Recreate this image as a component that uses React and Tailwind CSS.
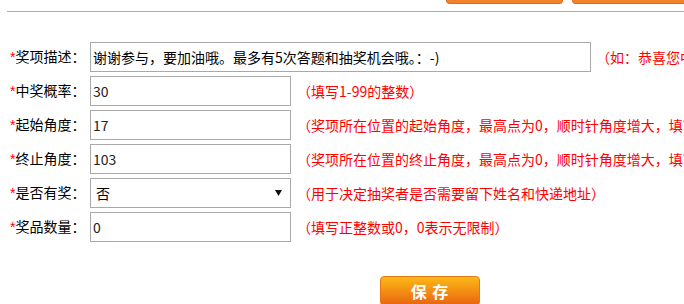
import { useState } from 'react'

const FONT = { fontFamily: '"Noto Sans CJK SC", "Liberation Sans", sans-serif' }

const ROWS = [
  { label: '奖项描述', value: '谢谢参与，要加油哦。最多有5次答题和抽奖机会哦。：-)', wide: true, hint: '（如：恭喜您中奖了）' },
  { label: '中奖概率', value: '30', hint: '（填写1-99的整数）' },
  { label: '起始角度', value: '17', hint: '（奖项所在位置的起始角度，最高点为0，顺时针角度增大，填写）' },
  { label: '终止角度', value: '103', hint: '（奖项所在位置的终止角度，最高点为0，顺时针角度增大，填写）' },
  { label: '是否有奖', value: '否', select: true, hint: '（用于决定抽奖者是否需要留下姓名和快递地址）' },
  { label: '奖品数量', value: '0', hint: '（填写正整数或0，0表示无限制）' },
]

function Field({ row }) {
  const [val, setVal] = useState(row.value)
  if (row.select) {
    return (
      <div className="flex shrink-0 items-center justify-between w-[201px] h-[30px] border border-[#a9a9a9] bg-white pl-[5px] pr-[8px] text-[14px] text-black">
        <span>{val}</span>
        <svg width="7" height="6" viewBox="0 0 7 6"><path d="M0 0h7L3.5 6z" fill="#111" /></svg>
      </div>
    )
  }
  return (
    <input
      value={val}
      onChange={e => setVal(e.target.value)}
      className={`${row.wide ? 'w-[501px]' : 'w-[201px]'} shrink-0 h-[30px] border border-[#a9a9a9] bg-white px-[2px] text-[14px] ${row.wide ? 'text-black' : 'text-[#222]'} outline-none`}
      style={FONT}
    />
  )
}

export default function App() {
  return (
    <div className="w-[684px] h-[304px] overflow-hidden bg-white" style={FONT}>
      {/* tabs scrolled off the top */}
      <div className="flex h-[4px] pl-[446px] gap-[9px]">
        <div className="w-[117px] h-[4px] shrink-0 rounded-b-[4px] border border-t-0 border-[#dd6a1c] bg-[#f4822c]" />
        <div className="w-[117px] h-[4px] shrink-0 rounded-b-[4px] border border-t-0 border-[#dd6a1c] bg-[#f4822c]" />
      </div>
      <div className="mt-[7px] ml-[7px] h-px bg-[#9fb79f]" />

      <div className="mt-[30px] flex flex-col gap-[4px]">
        {ROWS.map(row => (
          <div key={row.label} className="flex items-center h-[30px] whitespace-nowrap overflow-hidden">
            <div className="w-[90px] shrink-0 pl-[10px] text-[14px] text-black">
              <span className="text-[#f00]" style={{ fontFamily: '"Liberation Sans", sans-serif' }}>*</span>{row.label}：
            </div>
            <Field row={row} />
            <span className={`${row.wide ? 'ml-[5px]' : 'ml-[6px]'} shrink-0 text-[14px] text-[#f00]`}>{row.hint}</span>
          </div>
        ))}
      </div>

      <div className="mt-[34px] flex pl-[380px]">
        <button className="w-[100px] h-[30px] rounded-[4px] border border-[#e27a14] bg-gradient-to-b from-[#fcb817] to-[#e8630f] text-white text-[16px] font-bold tracking-[1px]">
          保 存
        </button>
      </div>
    </div>
  )
}
